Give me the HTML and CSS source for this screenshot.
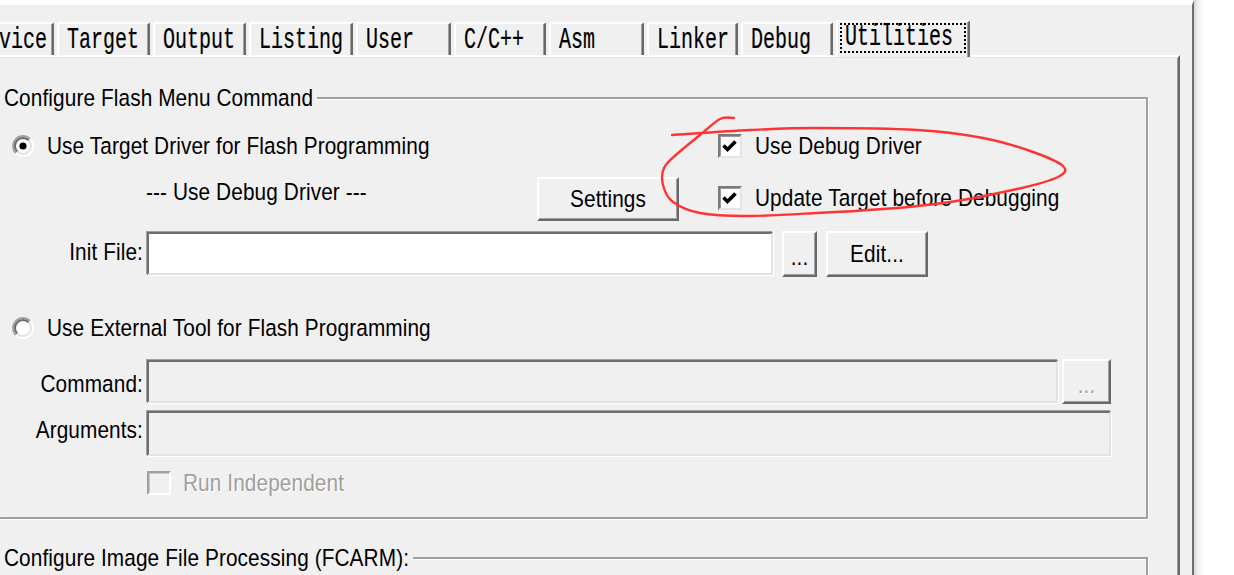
FILE: index.html
```
<!DOCTYPE html>
<html>
<head>
<meta charset="utf-8">
<title>Options for Target - Utilities</title>
<link rel="stylesheet" href="styles.css">
</head>
<body>
<div class="screen">
  <div class="window">
    <div class="tabs">
      <div class="tab"><span class="tl">Device</span></div>
      <div class="tab"><span class="tl">Target</span></div>
      <div class="tab"><span class="tl">Output</span></div>
      <div class="tab"><span class="tl">Listing</span></div>
      <div class="tab"><span class="tl">User</span></div>
      <div class="tab"><span class="tl">C/C++</span></div>
      <div class="tab"><span class="tl">Asm</span></div>
      <div class="tab"><span class="tl">Linker</span></div>
      <div class="tab"><span class="tl">Debug</span></div>
      <div class="tab tab-active"><span class="focus"><span class="tl">Utilities</span></span></div>
    </div>
    <div class="panel">
      <div class="group group-flash">
        <div class="ghead"><span class="glabel tx">Configure Flash Menu Command</span><span class="gline"></span></div>
        <div class="top-grid">
          <div class="opt">
            <svg class="radio" width="22" height="22" viewBox="0 0 22 22">
              <circle cx="11" cy="11" r="8" fill="#fff"/>
              <path d="M3.93 18.07 A10 10 0 0 1 18.07 3.93" stroke="#a0a0a0" stroke-width="2" fill="none"/>
              <path d="M18.07 3.93 A10 10 0 0 1 3.93 18.07" stroke="#ffffff" stroke-width="2" fill="none"/>
              <path d="M5.34 16.66 A8 8 0 0 1 16.66 5.34" stroke="#696969" stroke-width="2" fill="none"/>
              <path d="M16.66 5.34 A8 8 0 0 1 5.34 16.66" stroke="#e3e3e3" stroke-width="2" fill="none"/>
              <circle cx="11" cy="11" r="3.6" fill="#000"/>
            </svg>
            <span class="tx">Use Target Driver for Flash Programming</span>
          </div>
          <div class="chk-row">
            <span class="chk"><svg width="20" height="20" viewBox="0 0 20 20"><polyline points="3.5,9.5 7.5,13.5 15.5,5.5" fill="none" stroke="#000" stroke-width="3.6"/></svg></span>
            <span class="tx">Use Debug Driver</span>
          </div>
          <div class="driver-row">
            <span class="driver-text tx">--- Use Debug Driver ---</span>
            <div class="btn btn-settings"><span class="tx">Settings</span></div>
          </div>
          <div class="chk-row chk-row-2">
            <span class="chk"><svg width="20" height="20" viewBox="0 0 20 20"><polyline points="3.5,9.5 7.5,13.5 15.5,5.5" fill="none" stroke="#000" stroke-width="3.6"/></svg></span>
            <span class="tx">Update Target before Debugging</span>
          </div>
        </div>

        <div class="field-row row-init">
          <span class="flabel tx">Init File:</span>
          <span class="input input-init"></span>
          <div class="btn btn-dots"><span class="tx">...</span></div>
          <div class="btn btn-edit"><span class="tx">Edit...</span></div>
        </div>

        <div class="opt opt-ext">
          <svg class="radio" width="22" height="22" viewBox="0 0 22 22">
            <circle cx="11" cy="11" r="8" fill="#fff"/>
            <path d="M3.93 18.07 A10 10 0 0 1 18.07 3.93" stroke="#a0a0a0" stroke-width="2" fill="none"/>
            <path d="M18.07 3.93 A10 10 0 0 1 3.93 18.07" stroke="#ffffff" stroke-width="2" fill="none"/>
            <path d="M5.34 16.66 A8 8 0 0 1 16.66 5.34" stroke="#696969" stroke-width="2" fill="none"/>
            <path d="M16.66 5.34 A8 8 0 0 1 5.34 16.66" stroke="#e3e3e3" stroke-width="2" fill="none"/>
          </svg>
          <span class="tx">Use External Tool for Flash Programming</span>
        </div>

        <div class="field-row row-cmd">
          <span class="flabel tx">Command:</span>
          <span class="input input-disabled input-cmd"></span>
          <div class="btn btn-dots-dis"><span class="tx">...</span></div>
        </div>

        <div class="field-row row-args">
          <span class="flabel tx">Arguments:</span>
          <span class="input input-disabled input-args"></span>
        </div>

        <div class="run-row">
          <span class="chk chk-disabled"></span>
          <span class="disabled-text tx">Run Independent</span>
        </div>
      </div>

      <div class="group group-image">
        <div class="ghead"><span class="glabel tx">Configure Image File Processing (FCARM):</span><span class="gline"></span></div>
      </div>
    </div>
  </div>
  <div class="outside"></div>
</div>

<svg class="annot" width="1234" height="575" viewBox="0 0 1234 575">
  <path d="M672,135 C685,134.2 725.8,131.2 750,130 C774.2,128.8 789.2,128 817,128 C844.8,128 889.3,128.3 917,130 C944.7,131.7 963.7,134.3 983,138 C1002.3,141.7 1019.7,147.3 1033,152 C1046.3,156.7 1058.8,162 1063,166 C1067.2,170 1065.7,173 1058,177 C1050.3,181 1035,185 1017,189 C999,193 972.3,198.7 950,202 C927.7,205.3 905.2,207.5 883,209 C860.8,210.8 839.2,212 817,213 C794.8,214.2 769.5,215.8 750,216 C730.5,216.2 712.8,215.5 700,213 C687.2,210.5 679.2,206.5 673,202 C666.8,197.5 664.5,190.7 663,185 C661.5,179.3 661.7,173.2 664,168 C666.3,162.8 671,159.5 677,154 C683,148.5 692.8,140.8 700,135 C707.2,129.2 714.5,121.8 720,119 C725.5,116.2 730.8,118.2 734,118" fill="none" stroke="#ff3333" stroke-width="2.4" stroke-linecap="round" stroke-linejoin="round"/>
</svg>
</body>
</html>
```

FILE: styles.css
```
:root {
  --face: #f0f0f0;
  --dk: #696969;
  --sh: #a0a0a0;
  --lt: #e3e3e3;
}

html, body {
  margin: 0;
  padding: 0;
}

body {
  width: 1234px;
  height: 575px;
  overflow: hidden;
  position: relative;
  background: #fff;
  color: #000;
  font-family: "Liberation Sans", Arial, sans-serif;
  font-size: 20.8px;
  line-height: 24px;
  letter-spacing: 0.1px;
}

/* tall, narrow UI text like the scaled dialog font */
.tx {
  display: inline-block;
  transform: scaleY(1.15);
}

.screen {
  display: flex;
  height: 575px;
}

.window {
  box-sizing: border-box;
  width: 1194px;
  height: 575px;
  flex: none;
  background: var(--face);
  border-top: 5px solid #fff;
  border-right: 2px solid #6d6d6d;
  overflow: hidden;
}

.outside {
  flex: 1;
  background: linear-gradient(90deg, #d2d2d2 0, #ebebeb 3px, #fbfbfb 8px, #fff 11px);
}

/* ---------- tabs ---------- */
.tabs {
  display: flex;
  align-items: flex-end;
  gap: 3px;
  height: 50px;
  margin-left: -35px;
}

.tab {
  box-sizing: border-box;
  flex: none;
  height: 33px;
  padding: 2px 0 0 8px;
  background: var(--face);
  border-top: 2px solid #fff;
  border-left: 2px solid #fff;
  border-right: 2px solid var(--dk);
  box-shadow: inset -1px 0 0 var(--sh);
  border-top-left-radius: 2px;
  border-top-right-radius: 2px;
  white-space: nowrap;
}

.tab:nth-child(1) { width: 89px; }
.tab:nth-child(2) { width: 93px; }
.tab:nth-child(3) { width: 93px; }
.tab:nth-child(4) { width: 104px; }
.tab:nth-child(5) { width: 95px; }
.tab:nth-child(6) { width: 92px; }
.tab:nth-child(7) { width: 95px; }
.tab:nth-child(8) { width: 91px; }
.tab:nth-child(9) { width: 92px; }
.tab:nth-child(10) { width: 134px; }

.tl {
  display: inline-block;
  font-family: "Liberation Mono", "DejaVu Sans Mono", monospace;
  font-size: 20px;
  line-height: 20px;
  letter-spacing: 0;
  -webkit-text-stroke: 0.15px #000;
  transform: scaleY(1.5);
}

.tab-active {
  height: 37px;
  margin-bottom: -2px;
  padding: 1px 0 0 2px;
  position: relative;
  z-index: 1;
}

.tab-active .tl {
  margin-top: -2px;
}

.focus {
  display: block;
  box-sizing: border-box;
  width: 126px;
  height: 30px;
  padding: 0 0 0 5px;
  background:
    repeating-linear-gradient(90deg, #000 0 2px, transparent 2px 4px) left top / 100% 2px no-repeat,
    repeating-linear-gradient(90deg, #000 0 2px, transparent 2px 4px) left bottom / 100% 2px no-repeat,
    repeating-linear-gradient(180deg, #000 0 2px, transparent 2px 4px) left top / 2px 100% no-repeat,
    repeating-linear-gradient(180deg, #000 0 2px, transparent 2px 4px) right top / 2px 100% no-repeat;
}

/* ---------- panel ---------- */
.panel {
  box-sizing: border-box;
  width: 1200px;
  height: 520px;
  margin-left: -20px;
  padding: 40px 0 0 20px;
  border-top: 2px solid #fff;
  border-right: 2px solid var(--dk);
  box-shadow: inset 0 1px 0 var(--lt), inset -1px 0 0 var(--sh);
}

.group {
  box-sizing: border-box;
  display: flex;
  flex-direction: column;
  width: 1148px;
  border-right: 2px solid var(--sh);
  border-bottom: 2px solid var(--sh);
  box-shadow: 1px 1px 0 #fff;
}

.group-flash {
  padding-bottom: 22px;
}

.group-image {
  margin-top: 38px;
  height: 120px;
}

.ghead {
  display: flex;
  height: 24px;
  margin-top: -11px;
  padding-left: 4px;
}

.glabel {
  padding-right: 4px;
  white-space: nowrap;
}

.gline {
  flex: 1;
  height: 0;
  margin-top: 11px;
  border-top: 2px solid var(--sh);
  border-bottom: 1px solid #fff;
}

/* ---------- rows ---------- */
.top-grid {
  display: grid;
  grid-template-columns: 718px 1fr;
  grid-template-rows: 24px 45px;
  row-gap: 19px;
  margin-top: 24px;
}

.opt {
  display: flex;
  align-items: center;
  height: 24px;
  padding-left: 12px;
  white-space: nowrap;
}

.radio {
  flex: none;
  margin-right: 13px;
}

.chk-row {
  display: flex;
  align-items: center;
  height: 24px;
  white-space: nowrap;
}

.chk-row-2 {
  align-self: start;
  margin-top: 9px;
}

.chk {
  box-sizing: border-box;
  flex: none;
  display: block;
  width: 24px;
  height: 24px;
  margin-right: 13px;
  border: 2px solid;
  border-color: #7a7a7a #e3e3e3 #e3e3e3 #7a7a7a;
  box-shadow: inset 1px 1px 0 #9a9a9a;
  background: #fff;
}

.chk svg {
  display: block;
}

.chk-disabled {
  background: var(--face);
  margin-right: 12px;
  border-color: #a0a0a0 #fff #fff #a0a0a0;
  box-shadow: inset 1px 1px 0 #c8c8c8;
}

.driver-row {
  display: flex;
  align-items: flex-start;
  padding-left: 146px;
  padding-right: 39px;
}

.driver-text {
  margin-top: 3px;
  white-space: nowrap;
}

.btn {
  box-sizing: border-box;
  flex: none;
  display: flex;
  align-items: center;
  justify-content: center;
  background: var(--face);
  border: 2px solid;
  border-color: #fff var(--dk) var(--dk) #fff;
  box-shadow: inset -1px -1px 0 var(--sh);
  white-space: nowrap;
}

.btn-settings {
  margin-left: auto;
  margin-top: 0;
  width: 142px;
  height: 44px;
}

.field-row {
  display: flex;
  align-items: flex-start;
}

.flabel {
  box-sizing: border-box;
  flex: none;
  width: 143px;
  text-align: right;
  white-space: nowrap;
}

.input {
  box-sizing: border-box;
  flex: none;
  display: block;
  margin-left: 4px;
  margin-top: 1px;
  border: 2px solid;
  border-color: #6e6e6e #e3e3e3 #e3e3e3 #6e6e6e;
  box-shadow: -1px -1px 0 var(--sh), 1px 1px 0 #fff;
  background: #fff;
}

.input-disabled {
  background: var(--face);
}

.row-init {
  margin-top: 9px;
}
.row-init .flabel { margin-top: 9px; }
.input-init { width: 626px; height: 43px; }

.btn-dots {
  margin-left: 9px;
  width: 35px;
  height: 46px;
  padding-top: 6px;
}

.btn-edit {
  margin-left: 9px;
  width: 102px;
  height: 46px;
}

.opt-ext {
  margin-top: 39px;
}

.row-cmd {
  margin-top: 19px;
}
.row-cmd .flabel { margin-top: 13px; }
.input-cmd { width: 911px; height: 43px; }

.btn-dots-dis {
  margin-left: 4px;
  width: 49px;
  height: 45px;
  padding-top: 6px;
  color: var(--sh);
  text-shadow: 1px 1px 0 #fff;
}

.row-args {
  margin-top: 7px;
}
.row-args .flabel { margin-top: 7px; }
.input-args { width: 964px; height: 45px; margin-top: 0; }

.run-row {
  display: flex;
  align-items: center;
  height: 24px;
  margin-top: 15px;
  padding-left: 147px;
}

.disabled-text {
  color: var(--sh);
  text-shadow: 1px 1px 0 #fff;
  white-space: nowrap;
}

/* ---------- annotation overlay ---------- */
.annot {
  position: absolute;
  left: 0;
  top: 0;
  pointer-events: none;
}
```
